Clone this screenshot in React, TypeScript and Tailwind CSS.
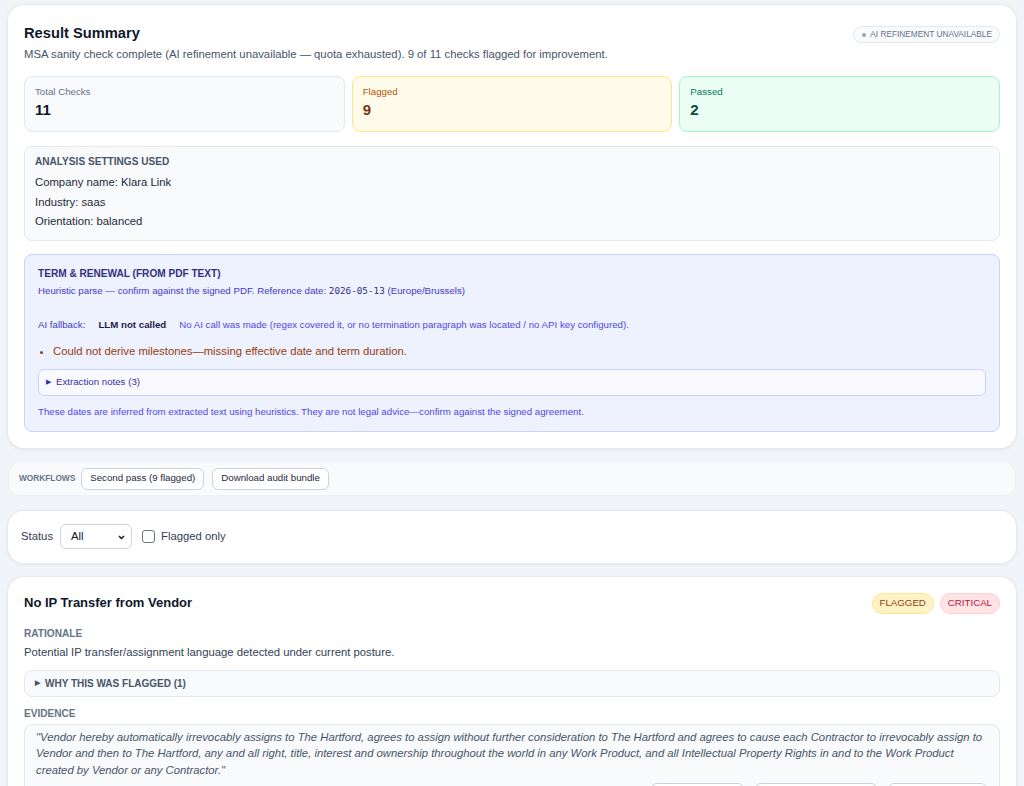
import React from 'react';

const font = { fontFamily: '"Liberation Sans", Arial, sans-serif' };

const cardShadow = 'shadow-[0_0_0_1px_#e6ebf1,0_1px_4px_rgba(15,23,42,0.10)]';

function StatCard({ label, value, tone }: { label: string; value: number; tone: 'slate' | 'amber' | 'emerald' }) {
  const box =
    tone === 'amber' ? 'bg-[#fffbeb] border-[#fde68a]' :
    tone === 'emerald' ? 'bg-[#ecfdf5] border-[#a7f3d0]' :
    'bg-[#f8fafc] border-[#e2e8f0]';
  const lab =
    tone === 'amber' ? 'text-[#b45309]' :
    tone === 'emerald' ? 'text-[#047857]' :
    'text-[#64748b]';
  const num =
    tone === 'amber' ? 'text-[#78350f]' :
    tone === 'emerald' ? 'text-[#064e3b]' :
    'text-[#0f172a]';
  return (
    <div className={`flex-1 border rounded-lg px-2.5 pt-[8px] pb-[11px] ${box}`}>
      <div className={`text-[9.7px] leading-[13px] ${lab}`}>{label}</div>
      <div className={`text-[15px] leading-[20px] font-bold mt-[2px] ${num}`}>{value}</div>
    </div>
  );
}

export default function App() {
  return (
    <div className="min-h-screen bg-[#f1f5f9] px-2 pt-[5px] pb-6" style={font}>
      {/* result summary */}
      <div className={`bg-white rounded-2xl ${cardShadow} px-4 pt-[17px] pb-[16px]`}>
        <div className="flex items-start justify-between">
          <h1 className="text-[14.7px] leading-[22px] font-bold text-[#0f172a]">Result Summary</h1>
          <span className="mt-[4px] flex items-center gap-[4px] rounded-full border border-[#e2e8f0] bg-[#f8fafc] pl-[8px] pr-[7px] h-[17px] text-[8.3px] uppercase text-[#64748b]">
            <span className="w-[4px] h-[4px] rounded-full bg-[#94a3b8]" />
            AI refinement unavailable
          </span>
        </div>
        <p className="mt-[1px] text-[11.3px] leading-[18px] text-[#475569]">
          MSA sanity check complete (AI refinement unavailable — quota exhausted). 9 of 11 checks flagged for improvement.
        </p>

        <div className="mt-[13px] flex gap-[7px]">
          <StatCard label="Total Checks" value={11} tone="slate" />
          <StatCard label="Flagged" value={9} tone="amber" />
          <StatCard label="Passed" value={2} tone="emerald" />
        </div>

        <div className="mt-3.5 rounded-lg border border-[#e2e8f0] bg-[#f8fafc] px-2.5 pt-2 pb-[8px]">
          <div className="text-[10.1px] leading-[14px] font-bold uppercase text-[#475569]">Analysis settings used</div>
          <div className="mt-1 text-[11.3px] leading-[19.5px] text-[#1e293b]">
            <div>Company name: Klara Link</div>
            <div>Industry: saas</div>
            <div>Orientation: balanced</div>
          </div>
        </div>

        <div className="mt-[13px] rounded-lg border border-[#c7d2fe] bg-[#eef2ff] px-[13px] pt-3 pb-3">
          <div className="text-[10.1px] leading-[14px] font-bold uppercase text-[#312e81]">Term &amp; renewal (from PDF text)</div>
          <div className="mt-0.5 text-[9.7px] leading-[15px] text-[#4338ca]">
            Heuristic parse — confirm against the signed PDF. Reference date:{' '}
            <span style={{ fontFamily: '"DejaVu Sans Mono", monospace' }} className="text-[9.3px] text-[#312e81]">2026-05-13</span>{' '}
            (Europe/Brussels)
          </div>
          <div className="mt-[19px] flex items-center text-[9.7px] leading-[15px]">
            <span className="text-[#4338ca]">AI fallback:</span>
            <span className="ml-[13px] font-bold text-[#1e1b4b]">LLM not called</span>
            <span className="ml-[13px] text-[#4f46e5]">No AI call was made (regex covered it, or no termination paragraph was located / no API key configured).</span>
          </div>
          <ul className="mt-2.5 list-disc pl-[15px] text-[11.3px] leading-[18px] text-[#92400e]">
            <li>Could not derive milestones—missing effective date and term duration.</li>
          </ul>
          <div className="mt-[9px] rounded-md border border-[#c7d2fe] bg-[#f8faff] h-[27px] flex items-center px-[7px] text-[9.7px] text-[#3730a3]">
            <span className="text-[6.5px] mr-[5px]">▶</span>Extraction notes (3)
          </div>
          <div className="mt-[9px] text-[9.7px] leading-[14px] text-[#4f46e5]">
            These dates are inferred from extracted text using heuristics. They are not legal advice—confirm against the signed agreement.
          </div>
        </div>
      </div>

      {/* workflows */}
      <div className="mt-3.5 flex items-center rounded-xl border border-[#eef2f6] bg-[#f8fafc] h-[34px] px-2.5">
        <span className="text-[8.3px] font-bold uppercase text-[#64748b]">Workflows</span>
        <button className="ml-[6px] h-[22px] rounded-md border border-[#cbd5e1] bg-white px-2 text-[9.7px] text-[#1e293b]">Second pass (9 flagged)</button>
        <button className="ml-2 h-[22px] rounded-md border border-[#cbd5e1] bg-white px-2 text-[9.7px] text-[#1e293b]">Download audit bundle</button>
      </div>

      {/* filters */}
      <div className={`mt-[15px] flex items-center h-[52px] rounded-2xl bg-white ${cardShadow} pl-[13px]`}>
        <span className="text-[11.3px] text-[#334155]">Status</span>
        <div className="ml-[7px] relative w-[72px] h-[25px] rounded-md border border-[#cbd5e1] bg-white flex items-center px-[10px] text-[11.3px] text-[#0f172a]">
          All
          <svg className="absolute right-[6px] top-[10px]" width="7" height="5" viewBox="0 0 7 5">
            <path d="M1 1 L3.5 3.5 L6 1" fill="none" stroke="#111827" strokeWidth="1.5" />
          </svg>
        </div>
        <span className="ml-[10px] w-[13px] h-[13px] rounded-[3px] border border-[#6b7280] bg-white" />
        <span className="ml-[6px] text-[11.3px] text-[#334155]">Flagged only</span>
      </div>

      {/* check card */}
      <div className={`mt-3.5 rounded-2xl bg-white ${cardShadow} p-4`}>
        <div className="flex items-start justify-between">
          <h2 className="text-[13px] leading-[20px] font-bold text-[#0f172a]">No IP Transfer from Vendor</h2>
          <div className="flex gap-1.5">
            <span className="h-[21px] flex items-center rounded-full bg-[#fef3c7] border border-[#fde68a] px-[7px] text-[9.7px] text-[#92400e]">FLAGGED</span>
            <span className="h-[21px] flex items-center rounded-full bg-[#ffe4e6] border border-[#fecdd3] px-[7px] text-[9.7px] text-[#be123c]">CRITICAL</span>
          </div>
        </div>

        <div className="mt-[13px] text-[10.1px] leading-[14px] font-bold uppercase text-[#64748b]">Rationale</div>
        <p className="mt-[2px] text-[11.3px] leading-[18px] text-[#334155]">Potential IP transfer/assignment language detected under current posture.</p>

        <div className="mt-[9px] h-[27px] flex items-center rounded-lg border border-[#e2e8f0] bg-[#f8fafc] px-2.5 text-[10px] font-bold uppercase text-[#475569]">
          <span className="text-[6.5px] mr-[5px]">▶</span>Why this was flagged (1)
        </div>

        <div className="mt-2.5 text-[10.1px] leading-[14px] font-bold uppercase text-[#64748b]">Evidence</div>
        <div className="mt-[3px] rounded-lg border border-[#e2e8f0] bg-[#f8fafc] px-[11px] pt-[4px] pb-3">
          <p className="italic text-[11.3px] leading-[16.5px] text-[#475569]">
            "Vendor hereby automatically irrevocably assigns to The Hartford, agrees to assign without further consideration to The Hartford and agrees to cause each Contractor to irrevocably assign to Vendor and then to The Hartford, any and all right, title, interest and ownership throughout the world in any Work Product, and all Intellectual Property Rights in and to the Work Product created by Vendor or any Contractor."
          </p>
          <div className="mt-[5px] flex justify-end gap-[11px] pr-px">
            <button className="w-[93px] h-[24px] rounded-md border border-[#cbd5e1] bg-white text-[9.7px] text-[#1e293b]">Copy evidence</button>
            <button className="w-[122px] h-[24px] rounded-md border border-[#cbd5e1] bg-white text-[9.7px] text-[#1e293b]">Suggest replacement</button>
            <button className="w-[99px] h-[24px] rounded-md border border-[#cbd5e1] bg-white text-[9.7px] text-[#1e293b]">Mark reviewed</button>
          </div>
        </div>
      </div>
    </div>
  );
}
